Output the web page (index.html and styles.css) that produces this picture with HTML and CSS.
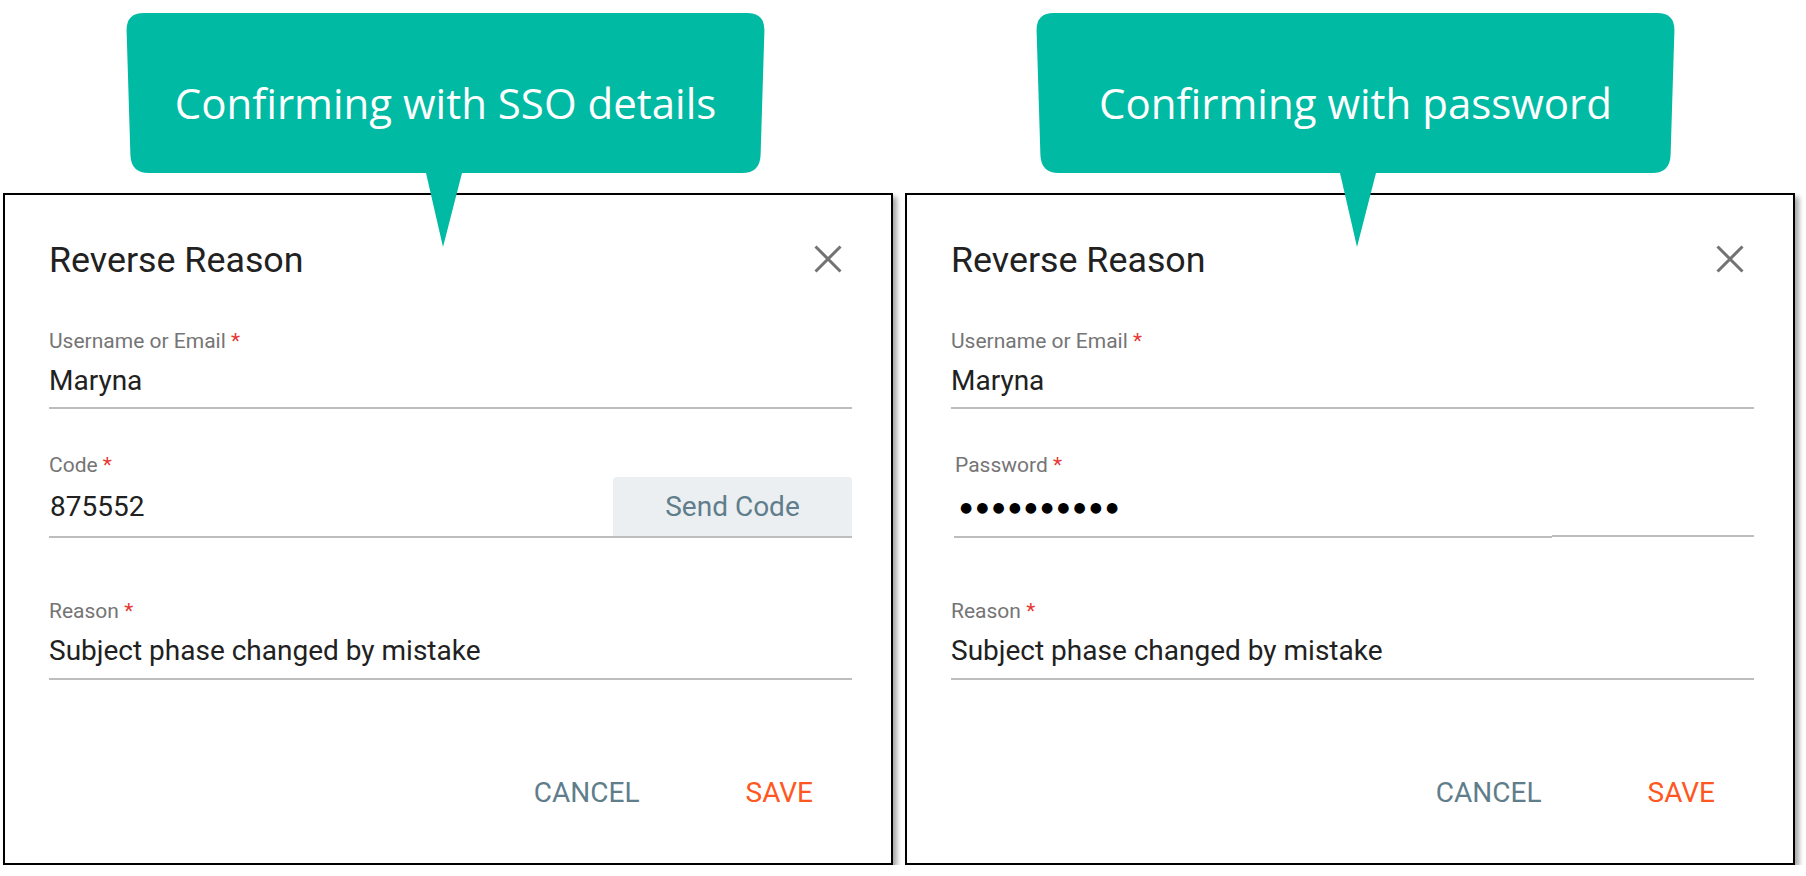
FILE: index.html
```html
<!DOCTYPE html>
<html lang="en">
<head>
<meta charset="utf-8">
<title>Reverse Reason</title>
<link rel="stylesheet" href="styles.css">
</head>
<body>
<div class="page">
  <section class="panel">
    <div class="callout callout-left">
      <svg class="callout-shape" width="639" height="234" viewBox="0 0 639 234" aria-hidden="true"><path d="M18 0 H621 Q639 0 638.4 18 L634.6 142 Q634 160 616 160 H336 L317 234 L300 160 H23 Q5 160 4.4 142 L0.6 18 Q0 0 18 0 Z"/></svg>
      <span class="callout-text">Confirming with SSO details</span>
    </div>
    <div class="dialog">
      <div class="dialog-head">
        <h2 class="dialog-title">Reverse Reason</h2>
        <svg class="close" width="28" height="28" viewBox="0 0 28 28" aria-hidden="true"><path d="M1.5 1.5 L26.5 26.5 M26.5 1.5 L1.5 26.5"/></svg>
      </div>
      <div class="field field-user">
        <div class="label">Username or Email <span class="req">*</span></div>
        <div class="control text-control"><span class="value">Maryna</span></div>
      </div>
      <div class="field field-code">
        <div class="label">Code <span class="req">*</span></div>
        <div class="control code-row">
          <span class="value code-value">875552</span>
          <button class="send-btn" type="button">Send Code</button>
        </div>
      </div>
      <div class="field field-reason">
        <div class="label">Reason <span class="req">*</span></div>
        <div class="control text-control reason-control"><span class="value">Subject phase changed by mistake</span></div>
      </div>
      <div class="actions">
        <button class="btn btn-cancel" type="button">CANCEL</button>
        <button class="btn btn-save" type="button">SAVE</button>
      </div>
    </div>
  </section>

  <section class="panel">
    <div class="callout callout-right">
      <svg class="callout-shape" width="639" height="234" viewBox="0 0 639 234" aria-hidden="true"><path d="M18 0 H621 Q639 0 638.4 18 L634.6 142 Q634 160 616 160 H340 L321 234 L304 160 H23 Q5 160 4.4 142 L0.6 18 Q0 0 18 0 Z"/></svg>
      <span class="callout-text">Confirming with password</span>
    </div>
    <div class="dialog">
      <div class="dialog-head">
        <h2 class="dialog-title">Reverse Reason</h2>
        <svg class="close" width="28" height="28" viewBox="0 0 28 28" aria-hidden="true"><path d="M1.5 1.5 L26.5 26.5 M26.5 1.5 L1.5 26.5"/></svg>
      </div>
      <div class="field field-user">
        <div class="label">Username or Email <span class="req">*</span></div>
        <div class="control text-control"><span class="value">Maryna</span></div>
      </div>
      <div class="field field-code">
        <div class="label label-pw">Password <span class="req">*</span></div>
        <div class="pw-row">
          <div class="control pw-input"><span class="dots">●●●●●●●●●●</span></div>
          <div class="control pw-rest"></div>
        </div>
      </div>
      <div class="field field-reason">
        <div class="label">Reason <span class="req">*</span></div>
        <div class="control text-control reason-control"><span class="value">Subject phase changed by mistake</span></div>
      </div>
      <div class="actions">
        <button class="btn btn-cancel" type="button">CANCEL</button>
        <button class="btn btn-save" type="button">SAVE</button>
      </div>
    </div>
  </section>
</div>
</body>
</html>
```
FILE: styles.css
```css
* { box-sizing: border-box; }

html, body {
  margin: 0;
  background: #ffffff;
}

body {
  font-family: Roboto, "Liberation Sans", Arial, sans-serif;
  color: #212121;
}

.page {
  display: grid;
  grid-template-columns: 890px 890px;
  column-gap: 12px;
  padding: 13px 0 0 3px;
}

.panel {
  display: flex;
  flex-direction: column;
  align-items: flex-start;
}

.callout {
  position: relative;
  z-index: 2;
  width: 639px;
  height: 160px;
  padding-top: 65px;
  text-align: center;
}

.callout-left { margin-left: 123px; }
.callout-right { margin-left: 131px; }

.callout-shape {
  position: absolute;
  left: 0;
  top: 0;
  overflow: visible;
}

.callout-shape path { fill: #00baa3; }

.callout-text {
  position: relative;
  display: block;
  font-family: "Open Sans", "Noto Sans", sans-serif;
  font-size: 42px;
  line-height: 50px;
  color: #ffffff;
}

.dialog {
  width: 890px;
  margin-top: 20px;
  border: 2px solid #000000;
  background: #ffffff;
  box-shadow: 4px 4px 5px rgba(0, 0, 0, 0.35);
  padding: 44px 39px 54px 44px;
}

.dialog-head {
  display: flex;
  justify-content: space-between;
  align-items: center;
  height: 40px;
}

.dialog-title {
  margin: 0;
  padding-top: 2px;
  font-size: 35.8px;
  line-height: 40px;
  font-weight: 400;
  color: #212121;
}

.close {
  margin-right: 10px;
  stroke: #737373;
  stroke-width: 3;
  fill: none;
}

.label {
  font-size: 21px;
  line-height: 24px;
  color: #757575;
}

.label-pw { margin-left: 4px; }

.req { color: #e53935; }

.control { border-bottom: 2px solid #bdbdbd; }

.value {
  display: block;
  font-size: 28px;
  line-height: 33px;
  color: #212121;
}

.field-user { margin-top: 50px; }

.text-control {
  margin-top: 11px;
  padding-bottom: 10px;
}

.reason-control {
  margin-top: 11px;
  padding-bottom: 11px;
}

.field-code { margin-top: 44px; }

.code-row {
  display: flex;
  align-items: flex-start;
  height: 61px;
}

.code-value {
  padding: 13px 0 0 1px;
}

.send-btn {
  margin-left: auto;
  width: 239px;
  height: 59px;
  border: 0;
  border-radius: 4px 4px 0 0;
  background: #eceff1;
  color: #607d8b;
  font-family: Roboto, "Liberation Sans", sans-serif;
  font-size: 28px;
  line-height: 33px;
  padding: 0;
}

.pw-row {
  display: flex;
  align-items: flex-end;
  height: 61px;
}

.pw-input {
  flex: 1;
  height: 61px;
  margin-left: 3px;
  padding: 20px 0 0 6px;
}

.pw-rest {
  width: 202px;
  margin-bottom: 1px;
}

.dots {
  display: block;
  font-family: "DejaVu Sans", sans-serif;
  font-size: 14px;
  line-height: 20px;
  letter-spacing: 4px;
  color: #000000;
}

.field-reason { margin-top: 61px; }

.actions {
  display: flex;
  justify-content: flex-end;
  gap: 106px;
  margin-top: 96px;
  padding-right: 39px;
}

.btn {
  border: 0;
  background: none;
  padding: 0;
  font-family: Roboto, "Liberation Sans", sans-serif;
  font-size: 28px;
  line-height: 33px;
}

.btn-cancel { color: #607d8b; }
.btn-save { color: #ff5722; }
```
